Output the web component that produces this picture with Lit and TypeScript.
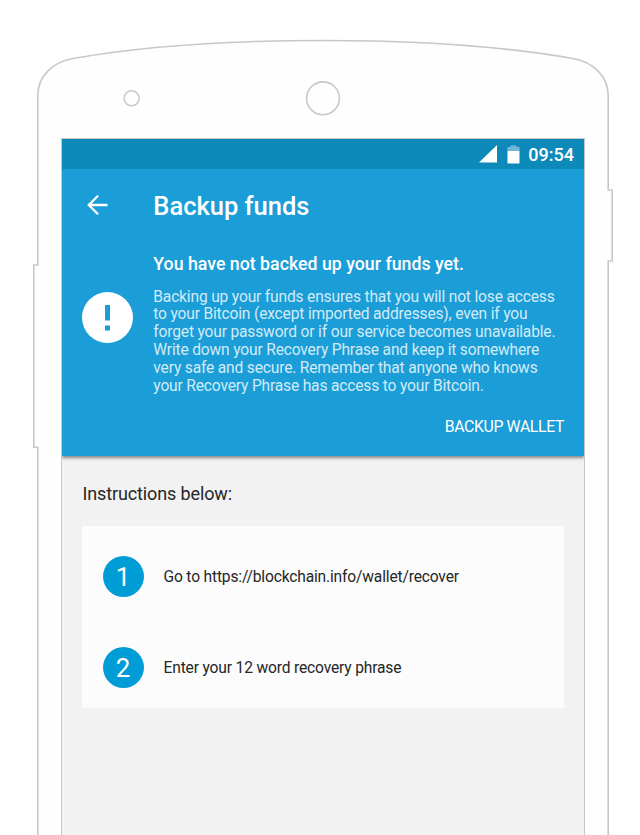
import { LitElement, html, css } from "lit";
import { customElement } from "lit/decorators.js";

const DETAILS = [
  "Backing up your funds ensures that you will not lose access",
  "to your Bitcoin (except imported addresses), even if you",
  "forget your password or if our service becomes unavailable.",
  "Write down your Recovery Phrase and keep it somewhere",
  "very safe and secure. Remember that anyone who knows",
  "your Recovery Phrase has access to your Bitcoin.",
];
const STEPS = ["Go to https://blockchain.info/wallet/recover", "Enter your 12 word recovery phrase"];

@customElement("app-root")
export class AppRoot extends LitElement {
  static styles = css`
    :host {
      display: block;
      position: relative;
      box-sizing: border-box;
      width: 640px;
      height: 835px;
      padding: 138px 55px 0 61px;
      overflow: hidden;
      background: #fff;
      font-family: Roboto, sans-serif;
    }
    * { box-sizing: border-box; }
    svg { display: block; flex: none; }
    .frame { position: absolute; left: 0; top: 0; }
    .screen {
      position: relative;
      height: 697px;
      border: 1px solid #c8c8c8;
      border-bottom: 0;
      background: #f2f2f2;
      overflow: hidden;
    }
    .status {
      height: 30px;
      display: flex;
      align-items: center;
      justify-content: flex-end;
      padding-right: 10px;
      background: #0e8aba;
      color: #fff;
    }
    .battery { margin-left: 10px; }
    .time { margin-left: 8px; padding-top: 2px; font-size: 18px; font-weight: 500; line-height: 30px; }
    .header {
      height: 287px;
      background: #1b9dd7;
      color: #fff;
      box-shadow: 0 2px 3px rgba(0, 0, 0, 0.45);
      clip-path: inset(0 0 -8px 0);
      padding-right: 20px;
    }
    .bar { display: flex; align-items: center; height: 72px; padding-left: 25px; }
    .title { margin: 2px 0 0 45.3px; font-size: 25.5px; font-weight: 500; line-height: 30px; }
    .notice { display: flex; padding-left: 20px; }
    .badge { margin-top: 51px; margin-right: 20.3px; }
    .lead { margin-top: 12px; font-size: 17.75px; font-weight: 500; line-height: 22px; }
    .details {
      margin-top: 13.6px;
      font-size: 15.6px;
      letter-spacing: -0.18px;
      line-height: 17.8px;
      color: #d1ebf7;
      white-space: nowrap;
    }
    .action {
      margin-top: 21.4px;
      font-size: 15.8px;
      letter-spacing: -0.36px;
      line-height: 20px;
      text-align: right;
      white-space: nowrap;
    }
    .body { padding: 27px 20px 0; }
    .label { padding-left: 0.5px; font-size: 18px; letter-spacing: -0.13px; line-height: 22px; color: #262626; }
    .card { margin-top: 20.5px; height: 182.5px; padding: 5px 20.5px; background: #fcfcfc; }
    .step {
      display: flex;
      align-items: center;
      height: 91.5px;
      font-size: 15.6px;
      letter-spacing: -0.17px;
      color: #262626;
      white-space: nowrap;
    }
    .text { padding-top: 1.2px; line-height: 20px; }
    .num {
      width: 41px;
      height: 41px;
      margin-right: 20px;
      border-radius: 50%;
      background: #009cd5;
      color: #fff;
      font: 26px/43px Roboto, sans-serif;
      letter-spacing: 0;
      text-align: center;
    }
  `;

  render() {
    return html`
      <svg class="frame" width="640" height="835" fill="none" stroke="#c8c8c8" stroke-width="1.6">
        <path fill="#fefefe" d="M37.8 840V447.3H33.8V265H37.8V95C38 76 53 62 73 58.5C150 45 235 40.5 323 40.5C411 40.5 496 45 573 58.5C593 62 607.8 76 608.2 95V190H612.2V261H608.2V840" />
        <circle cx="131.6" cy="98.3" r="7.5" />
        <circle cx="323" cy="98.3" r="16.4" />
      </svg>
      <main class="screen">
        <div class="status">
          <svg width="18" height="18"><path fill="#fff" d="M0 17.5L18 0V17.5Z" /></svg>
          <svg class="battery" width="13" height="19">
            <path fill="#72b8d8" d="M3.5 0.5h6v1.5h3v4h-12V2h3Z" />
            <path fill="#fff" d="M.5 6h12v12.5H.5Z" />
          </svg>
          <span class="time">09:54</span>
        </div>
        <header class="header">
          <div class="bar">
            <svg width="21" height="20" fill="none" stroke="#fff" stroke-width="2.3">
              <path d="M20.5 10H2M11 .8L1.8 10L11 19.2" />
            </svg>
            <h1 class="title">Backup funds</h1>
          </div>
          <div class="notice">
            <svg class="badge" width="51" height="51">
              <circle cx="25.5" cy="25.5" r="25.5" fill="#fff" />
              <path fill="#1b9dd7" d="M23 13h5v15.5h-5ZM23 33.5h5v5h-5Z" />
            </svg>
            <div>
              <div class="lead">You have not backed up your funds yet.</div>
              <div class="details">${DETAILS.map((line) => html`<div>${line}</div>`)}</div>
            </div>
          </div>
          <div class="action">BACKUP WALLET</div>
        </header>
        <section class="body">
          <div class="label">Instructions below:</div>
          <div class="card">
            ${STEPS.map((text, i) => html`<div class="step"><span class="num">${i + 1}</span><span class="text">${text}</span></div>`)}
          </div>
        </section>
      </main>
    `;
  }
}
